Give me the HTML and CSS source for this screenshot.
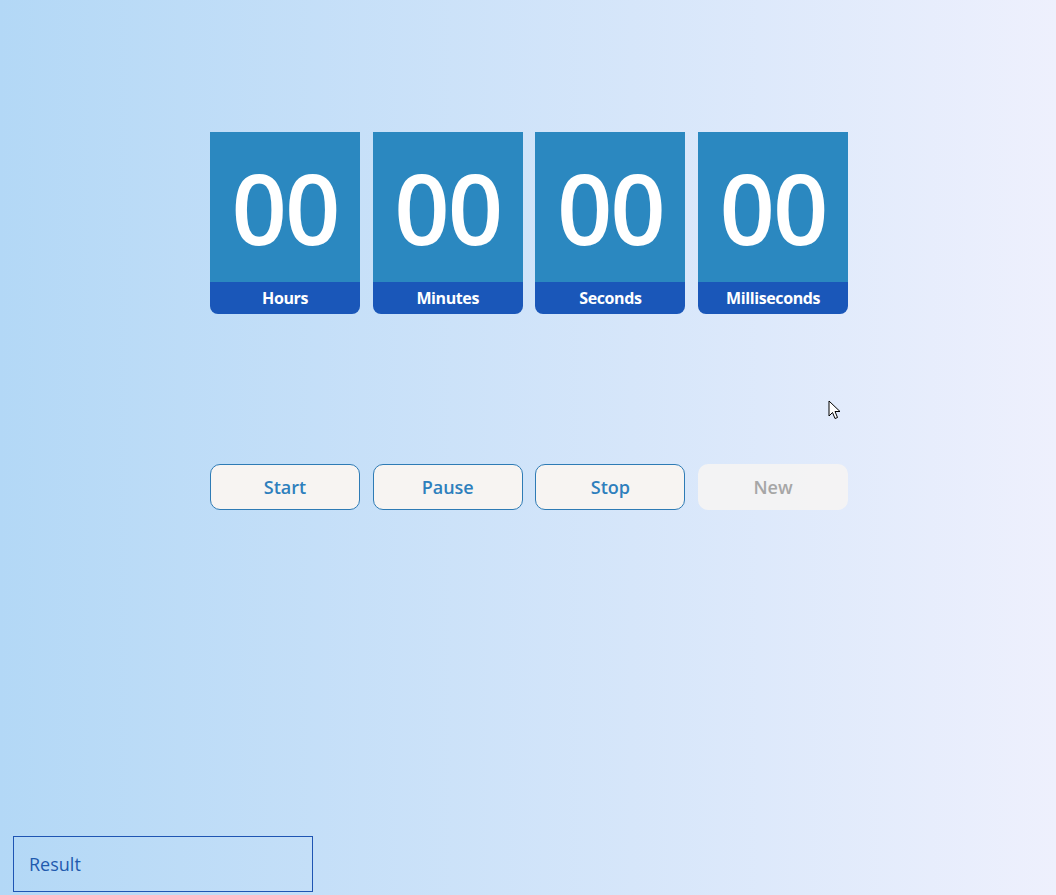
FILE: index.html
```html
<!DOCTYPE html>
<html>
<head>
<meta charset="utf-8">
<link rel="stylesheet" href="styles.css">
</head>
<body>
<div class="screen">
  <div class="timer">
    <div class="card"><div class="num">00</div><div class="lbl">Hours</div></div>
    <div class="card"><div class="num">00</div><div class="lbl">Minutes</div></div>
    <div class="card"><div class="num">00</div><div class="lbl">Seconds</div></div>
    <div class="card"><div class="num">00</div><div class="lbl">Milliseconds</div></div>
  </div>
  <div class="buttons">
    <button class="btn">Start</button>
    <button class="btn">Pause</button>
    <button class="btn">Stop</button>
    <button class="btn disabled">New</button>
  </div>
  <div class="result">Result</div>
  <svg class="cursor" width="14" height="20" viewBox="0 0 14 20"><path d="M1 1 L1 16 L4.5 12.5 L7 18.5 L9.5 17.5 L7 11.5 L12 11.5 Z" fill="#fff" stroke="#000" stroke-width="1" stroke-linejoin="miter"/></svg>
</div>
</body>
</html>
```
FILE: styles.css
```css
html, body { margin: 0; padding: 0; }
body {
  width: 1056px;
  height: 895px;
  overflow: hidden;
  font-family: "Open Sans", "Noto Sans", sans-serif;
}
.screen {
  position: relative;
  width: 1056px;
  height: 895px;
  background: linear-gradient(90deg, #b3d8f6 0%, #d6e6fa 60%, #eef0fd 100%);
  display: flex;
  flex-direction: column;
  box-sizing: border-box;
}
.timer {
  display: flex;
  gap: 12.7px;
  margin: 132px 0 0 210px;
}
.card {
  width: 150px;
  display: flex;
  flex-direction: column;
  border-radius: 0 0 8px 8px;
  overflow: hidden;
}
.num {
  height: 150px;
  background: #2b88c0;
  color: #fff;
  font-size: 97px;
  font-weight: 600;
  line-height: 150px;
  text-align: center;
  letter-spacing: -2px;
}
.lbl {
  height: 32px;
  background: #1a57b9;
  color: #fff;
  font-weight: 700;
  font-size: 16px;
  line-height: 32px;
  text-align: center;
  letter-spacing: -0.4px;
}
.buttons {
  display: flex;
  gap: 12.7px;
  margin: 150px 0 0 210px;
}
.btn {
  width: 150px;
  height: 46px;
  box-sizing: border-box;
  border: 1px solid #2e7bb5;
  border-radius: 10px;
  background: #f7f4f2;
  color: #2e7fbd;
  font-family: "Open Sans", "Noto Sans", sans-serif;
  font-weight: 600;
  font-size: 18px;
  padding: 0;
}
.btn.disabled {
  border-color: transparent;
  background: rgba(247, 244, 242, 0.85);
  color: #a6a6a6;
}
.result {
  margin: 326px 0 0 13px;
  width: 300px;
  height: 56px;
  box-sizing: border-box;
  border: 1px solid #1f55b3;
  color: #1f5aae;
  font-size: 18px;
  font-weight: 500;
  line-height: 54px;
  padding-left: 15px;
}
.cursor {
  position: absolute;
  left: 828px;
  top: 400px;
}
```
